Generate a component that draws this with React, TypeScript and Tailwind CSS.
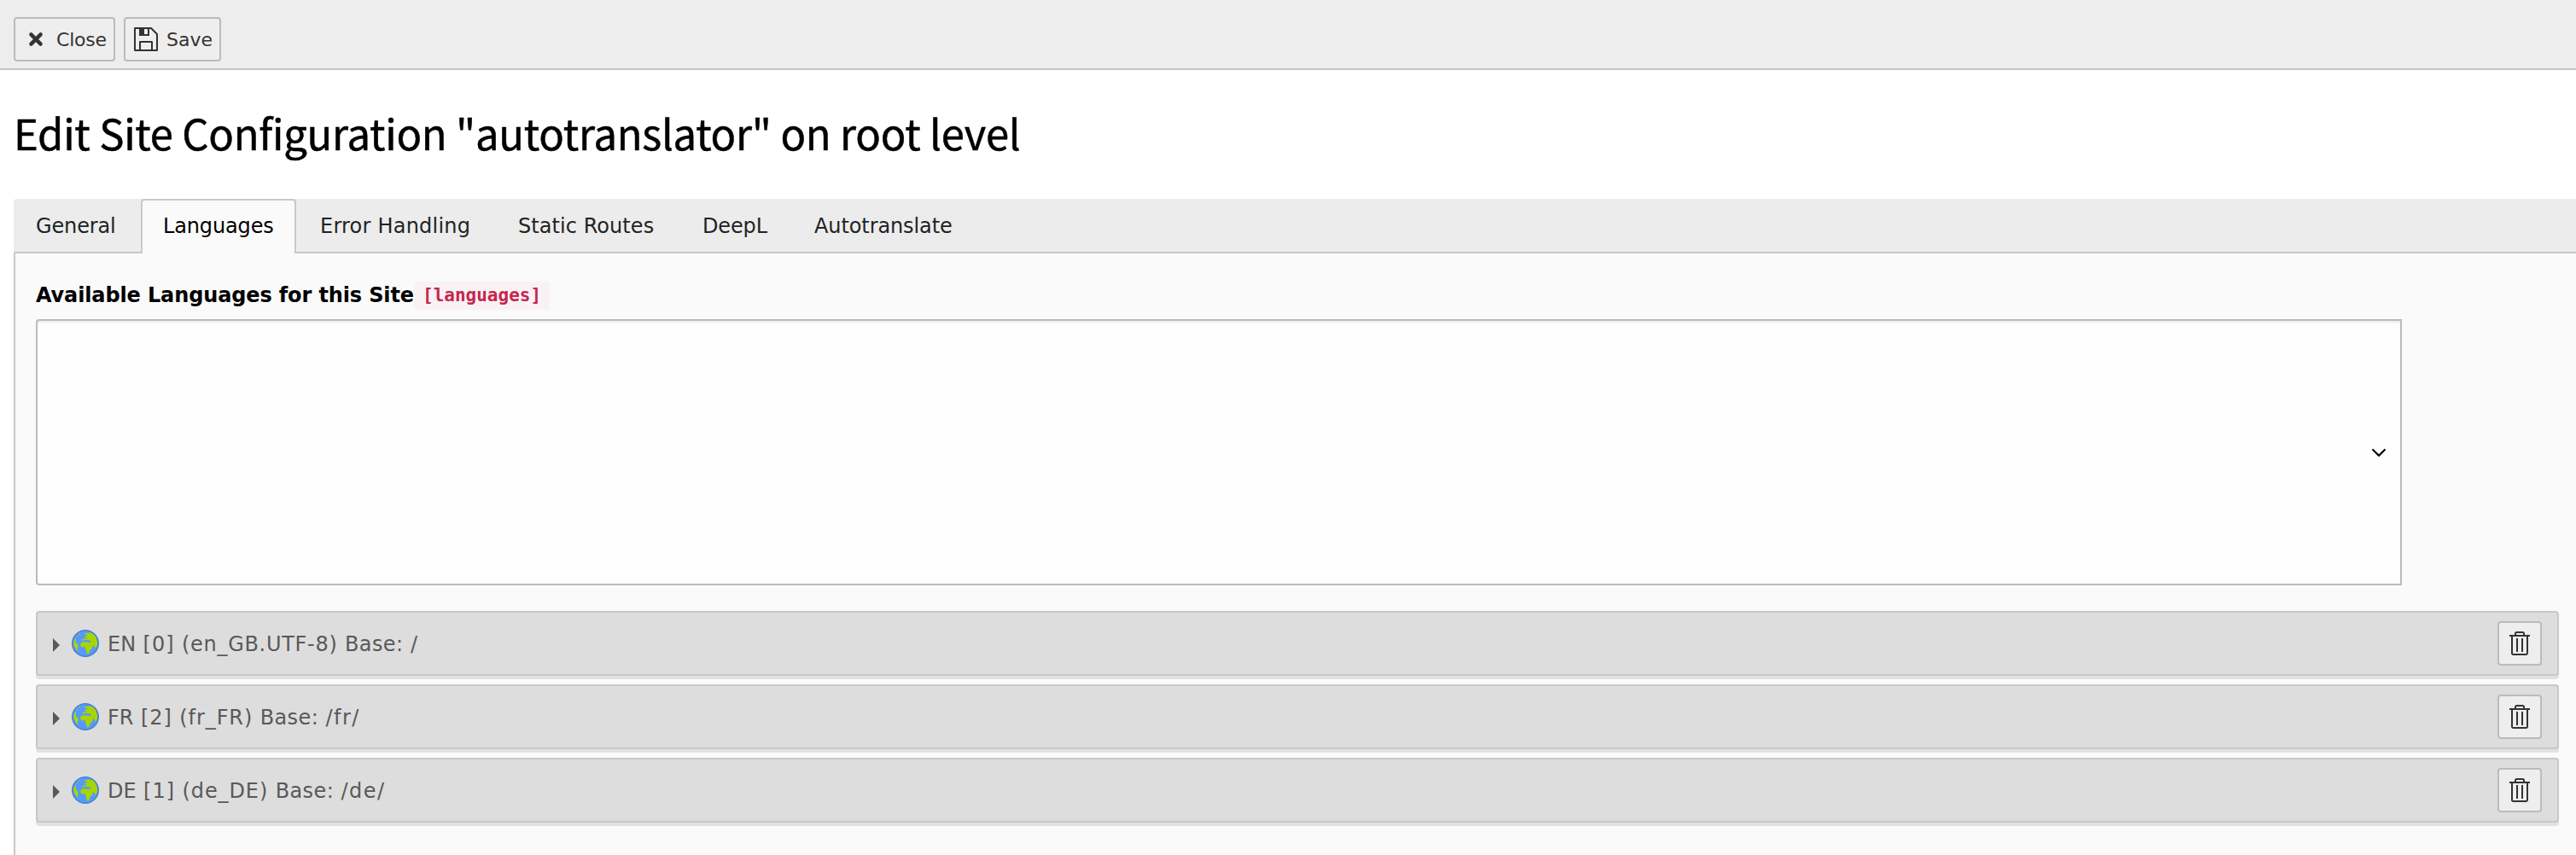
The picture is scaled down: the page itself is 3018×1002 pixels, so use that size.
import type { ReactNode } from 'react';

const sans = "font-['DejaVu_Sans',Verdana,sans-serif]";

const tabs = [
  { label: 'General', box: 'w-[149px] pl-[26px] pt-[2px]', text: 'tracking-[-0.14px] text-[#212424]' },
  {
    label: 'Languages',
    box: 'relative z-10 h-[64px] w-[182px] rounded-t-[4px] border-2 border-b-0 border-[#c8c8c8] bg-[#fafafa] pb-[2px] pl-6',
    text: 'tracking-[-0.14px] text-black',
  },
  { label: 'Error Handling', box: 'w-[231px] pl-[28px] pt-[2px]', text: 'tracking-[0.22px] text-[#212424]' },
  { label: 'Static Routes', box: 'w-[215px] pl-[29px] pt-[2px]', text: 'tracking-[0.06px] text-[#212424]' },
  { label: 'DeepL', box: 'w-[132px] pl-[30px] pt-[2px]', text: 'tracking-[-0.14px] text-[#212424]' },
  { label: 'Autotranslate', box: 'w-[220px] pl-[29px] pt-[2px]', text: 'tracking-[-0.1px] text-[#212424]' },
];

const rows = [
  { name: 'EN', id: '[0]', locale: '(en_GB.UTF-8)', localeText: 'tracking-[0.7px]', base: '/' },
  { name: 'FR', id: '[2]', locale: '(fr_FR)', localeText: 'tracking-[0.9px]', base: '/fr/' },
  { name: 'DE', id: '[1]', locale: '(de_DE)', localeText: 'tracking-[0.9px]', base: '/de/' },
];

function Icon({ children }: { children: ReactNode }) {
  return (
    <svg viewBox="0 0 16 16" className="size-8 shrink-0">
      {children}
    </svg>
  );
}

function CloseIcon() {
  return (
    <Icon>
      <path d="M5.200 5.200l5.600 5.600M10.800 5.200l-5.600 5.600" stroke="#333" strokeWidth="2.200" strokeLinecap="round" />
    </Icon>
  );
}

function SaveIcon() {
  return (
    <Icon>
      <path d="M1.500 1.500h9.500l3.500 3.500v9.500h-13z" fill="none" stroke="#333" strokeLinejoin="round" />
      <path d="M4 1h6v5H4z M7 2v3h2V2z" fill="#333" fillRule="evenodd" />
      <path d="M4.500 14.500v-5h7v5" fill="none" stroke="#333" strokeLinejoin="round" />
    </Icon>
  );
}

function TrashIcon() {
  return (
    <Icon>
      <g fill="#333">
        <path d="M7 5H6v8h1zM10 5H9v8h1z" />
        <path d="M13 3h-2v-.75C11 1.56 10.44 1 9.75 1h-3.5C5.56 1 5 1.56 5 2.25V3H3v10.75c0 .69.56 1.25 1.25 1.25h7.5c.69 0 1.25-.56 1.25-1.25V3zm-7-.75A.25.25 0 0 1 6.25 2h3.5a.25.25 0 0 1 .25.25V3H6v-.75zm6 11.5a.25.25 0 0 1-.25.25h-7.5a.25.25 0 0 1-.25-.25V4h8v9.75z" />
        <path d="M2 3h12v1H2z" />
      </g>
    </Icon>
  );
}

function GlobeIcon() {
  return (
    <Icon>
      <circle cx="8" cy="8" r="7.600" fill="#59f" />
      <g fill="#a8d500">
        <path d="M7.600 2.100L10 1.800l2.300.3 1.700 1.700 1 3v2.400l-1 1.700-.9-1.500-.8-.3-.2 1.700-1.500 1.500-.3 1.600-1.200.3-.9-2.400-.3-1.700-2 .1L5 9.100l.4-1.300L7 7l2.500.4 1.500.1.1-1.100-1.400-.3-1.600-.2-1.900.5-.3-.5 1.200-.7 1.800-.1-.5-.6-1.300-.1 1.500-.8.9-.6-1.900-.1z" />
        <path d="M2.100 4.900l.5.200-.3 1.100.2 1.400 1.200 1.200.2 1.300-.5 1 .4 1.600-1.300-1.300L1.200 9l-.1-2z" />
        <path d="M3.800 2.400l1-.6.400.3-.8.5zM3 3.600l.7-.4.1.5-.6.4z" />
      </g>
      <circle cx="8" cy="8" r="7.600" fill="none" stroke="#4a80d0" strokeWidth=".8" />
    </Icon>
  );
}

export default function App() {
  return (
    <div className={`flex h-[1002px] w-[3018px] flex-col overflow-hidden bg-white ${sans}`}>
      <header className="flex h-[82px] shrink-0 items-start gap-[10px] border-b-2 border-[#c3c3c3] bg-[#ededed] pt-[20px] pl-4 text-[22px] text-[#333]">
        <button className="flex h-[52px] w-[119px] items-center gap-[8px] rounded-[4px] border-2 border-[#bbb] bg-[#eee] pl-2 whitespace-nowrap">
          <CloseIcon />
          <span className="tracking-[-0.2px]">Close</span>
        </button>
        <button className="flex h-[52px] w-[114px] items-center gap-[8px] rounded-[4px] border-2 border-[#bbb] bg-[#eee] pl-2 whitespace-nowrap">
          <SaveIcon />
          <span>Save</span>
        </button>
      </header>

      <main className="flex flex-1 flex-col pl-4">
        <h1 className="mt-[37px] h-[72px] font-['Noto_Sans_CJK_JP',sans-serif] text-[49px] leading-[72px] tracking-[-0.28px] whitespace-nowrap text-black [-webkit-text-stroke:0.5px_black]">
          Edit Site Configuration "autotranslator" on root level
        </h1>

        <nav className="mt-[42px] flex h-[64px] rounded-tl-[4px] border-b-2 border-[#c8c8c8] bg-[#ececec] text-2xl">
          {tabs.map((tab) => (
            <div key={tab.label} className={`flex h-[62px] shrink-0 items-center whitespace-nowrap ${tab.box}`}>
              <span className={tab.text}>{tab.label}</span>
            </div>
          ))}
        </nav>

        <section className="flex flex-1 flex-col border-l-2 border-[#c8c8c8] bg-[#fafafa] pr-5 pl-6">
          <div className="mt-[33px] flex h-[33px] items-center whitespace-nowrap">
            <span className="w-[443px] pb-[2px] text-2xl font-bold tracking-[-0.13px] text-black">
              Available Languages for this Site
            </span>
            <code className="h-[33px] rounded-[4px] bg-[#f9f2f4] px-[10px] font-['DejaVu_Sans_Mono',monospace] text-[21px] leading-[33px] font-bold text-[#c7254e]">
              [languages]
            </code>
          </div>

          <div className="mt-[11px] flex h-[312px] w-[2772px] shrink-0 items-center justify-end rounded-l-[4px] border-2 border-[#bbb] bg-[#fefefe] pr-4 shadow-[inset_0_2px_2px_rgba(0,0,0,0.075)]">
            <svg viewBox="0 0 18 12" className="mt-[2px] h-3 w-[18px]">
              <path d="M1.500 1.500L9 9l7.500-7.500" fill="none" stroke="#000" strokeWidth="2.200" />
            </svg>
          </div>

          <div className="mt-[30px] flex flex-col gap-[10px]">
            {rows.map((row) => (
              <div
                key={row.name}
                className="flex h-[76px] items-center rounded-[4px] border-2 border-[#c8c8c8] bg-[#ddd] pr-[18px] pl-[18px] text-2xl text-[#595959] shadow-[0_4px_0_#e1e1e1]"
              >
                <svg viewBox="0 0 8 16" className="mt-[4px] h-4 w-2">
                  <path d="M0 0l8 8-8 8z" fill="#595959" />
                </svg>
                <span className="ml-[14px] flex">
                  <GlobeIcon />
                </span>
                <span className="ml-[10px] flex-1 pt-[2px] whitespace-nowrap [word-spacing:0.8px]">
                  {row.name} <span className="tracking-[1px]">{row.id}</span>{' '}
                  <span className={row.localeText}>{row.locale}</span>{' '}
                  <span className="tracking-[0.4px]">Base:</span>{' '}
                  <span className="tracking-[1.4px]">{row.base}</span>
                </span>
                <button className="flex size-[52px] items-center justify-center rounded-[4px] border-2 border-[#bbb] bg-[#eee]">
                  <TrashIcon />
                </button>
              </div>
            ))}
          </div>
        </section>
      </main>
    </div>
  );
}
